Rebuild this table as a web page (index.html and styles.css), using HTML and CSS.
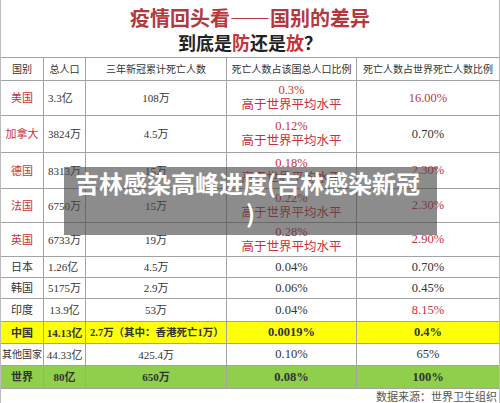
FILE: index.html
```html
<!DOCTYPE html>
<html lang="zh-CN">
<head>
    <meta charset="UTF-8">
    <meta name="viewport" content="width=device-width, initial-scale=1.0">
    <title>疫情回头看——国别的差异</title>
    <link rel="stylesheet" href="styles.css">
</head>
<body>
    <div class="sheet">
        <div class="heading">
            <div class="title">疫情回头看——国别的差异</div>
            <div class="subtitle">到底是<span class="red">防</span>还是<span class="red">放</span>？</div>
        </div>

        <table class="data">
            <colgroup>
                <col class="c1"><col class="c2"><col class="c3"><col class="c4"><col class="c5">
            </colgroup>
            <tr class="head">
                <td>国别</td>
                <td>总人口</td>
                <td>三年新冠累计死亡人数</td>
                <td>死亡人数占该国总人口比例</td>
                <td>死亡人数占世界死亡人数比例</td>
            </tr>
            <tr class="two h35">
                <td class="red">美国</td>
                <td class="left">3.3亿</td>
                <td>108万</td>
                <td class="red big">0.3%<br>高于世界平均水平</td>
                <td class="red big">16.00%</td>
            </tr>
            <tr class="two h37">
                <td class="red">加拿大</td>
                <td class="left">3824万</td>
                <td>4.5万</td>
                <td class="red big">0.12%<br>高于世界平均水平</td>
                <td class="big">0.70%</td>
            </tr>
            <tr class="two h36">
                <td class="red">德国</td>
                <td class="left">8313万</td>
                <td>15万</td>
                <td class="red big">0.18%<br>高于世界平均水平</td>
                <td class="red big">2.30%</td>
            </tr>
            <tr class="two h34">
                <td class="red">法国</td>
                <td class="left">6750万</td>
                <td>15万</td>
                <td class="red big">0.22%<br>高于世界平均水平</td>
                <td class="red big">2.30%</td>
            </tr>
            <tr class="two h34">
                <td class="red">英国</td>
                <td class="left">6733万</td>
                <td>19万</td>
                <td class="red big">0.28%<br>高于世界平均水平</td>
                <td class="red big">2.90%</td>
            </tr>
            <tr class="h21">
                <td>日本</td>
                <td class="left">1.26亿</td>
                <td>4.5万</td>
                <td class="big">0.04%</td>
                <td class="big">0.70%</td>
            </tr>
            <tr class="h21">
                <td>韩国</td>
                <td>5175万</td>
                <td>2.9万</td>
                <td class="big">0.06%</td>
                <td class="big">0.45%</td>
            </tr>
            <tr class="h23">
                <td>印度</td>
                <td>13.9亿</td>
                <td>53万</td>
                <td class="big">0.04%</td>
                <td class="red big">8.15%</td>
            </tr>
            <tr class="h22 china">
                <td>中国</td>
                <td>14.13亿</td>
                <td class="left note">2.7万（其中：香港死亡1万）</td>
                <td class="big">0.0019%</td>
                <td class="big">0.4%</td>
            </tr>
            <tr class="h22">
                <td class="tight">其他国家</td>
                <td>44.33亿</td>
                <td>425.4万</td>
                <td class="big">0.10%</td>
                <td class="big">65%</td>
            </tr>
            <tr class="h23 world">
                <td>世界</td>
                <td>80亿</td>
                <td>650万</td>
                <td class="big">0.08%</td>
                <td class="big">100%</td>
            </tr>
        </table>

        <div class="source">数据来源：世界卫生组织</div>

        <div class="overlay">
            <div class="line1">吉林感染高峰进度(吉林感染新冠</div>
            <div class="line2">)</div>
        </div>
    </div>
</body>
</html>
```

FILE: styles.css
```css
body {
    margin: 0;
    background: #fff;
    font-family: "Liberation Serif", "Noto Sans CJK SC", serif;
    color: #333;
}
.sheet {
    position: relative;
    width: 500px;
    height: 403px;
    box-sizing: border-box;
    border-left: 1px solid #bbb;
    border-right: 1px solid #bbb;
    overflow: hidden;
}
.heading {
    height: 57px;
    box-sizing: border-box;
    padding-top: 6px;
    text-align: center;
    font-family: "Noto Sans CJK SC", sans-serif;
    font-weight: 700;
}
.title {
    font-size: 20px;
    line-height: 24px;
    color: #b5393c;
}
.subtitle {
    font-size: 18px;
    line-height: 24px;
    color: #222;
}
.red {
    color: #c8323a;
}
.data {
    width: 499px;
    margin-left: -1px;
    border-collapse: collapse;
    table-layout: fixed;
    font-size: 11px;
}
.c1 { width: 43px; }
.c2 { width: 42px; }
.c3 { width: 141px; }
.c4 { width: 130px; }
.c5 { width: 143px; }
.data td {
    border: 1px solid #a3a3a3;
    padding: 0;
    text-align: center;
    line-height: 14px;
    white-space: nowrap;
    overflow: hidden;
}
.data td.left {
    text-align: left;
    padding-left: 4px;
}
.data td.tight {
    font-size: 10px;
}
.data td.note {
    font-size: 10.5px;
}
.head td {
    height: 22px;
    font-size: 10px;
    font-family: "Noto Sans CJK SC", sans-serif;
    color: #333;
}
.data td.big {
    font-size: 12.5px;
    line-height: 15px;
}
.h21 td { height: 20px; }
.h22 td { height: 21px; }
.h23 td { height: 22px; }
.h34 td { height: 33px; }
.h35 td { height: 34px; }
.h36 td { height: 35px; }
.h37 td { height: 36px; }
.china td {
    background: #ffff0a;
    color: #333;
    font-weight: 700;
}
.world td {
    background: #8fcf4c;
    color: #333;
    font-weight: 700;
}
.source {
    text-align: right;
    font-size: 11px;
    line-height: 15px;
    color: #555;
    padding-right: 2px;
    font-family: "Noto Sans CJK SC", sans-serif;
}
.overlay {
    position: absolute;
    left: 63px;
    top: 167px;
    width: 373px;
    height: 68px;
    box-sizing: border-box;
    padding-top: 1px;
    background: rgba(70, 70, 70, 0.62);
    color: #fff;
    font-family: "Noto Sans CJK SC", sans-serif;
    font-weight: 700;
    font-size: 24px;
    line-height: 30px;
}
.line1 {
    padding-left: 11px;
}
.line2 {
    text-align: center;
}
```
